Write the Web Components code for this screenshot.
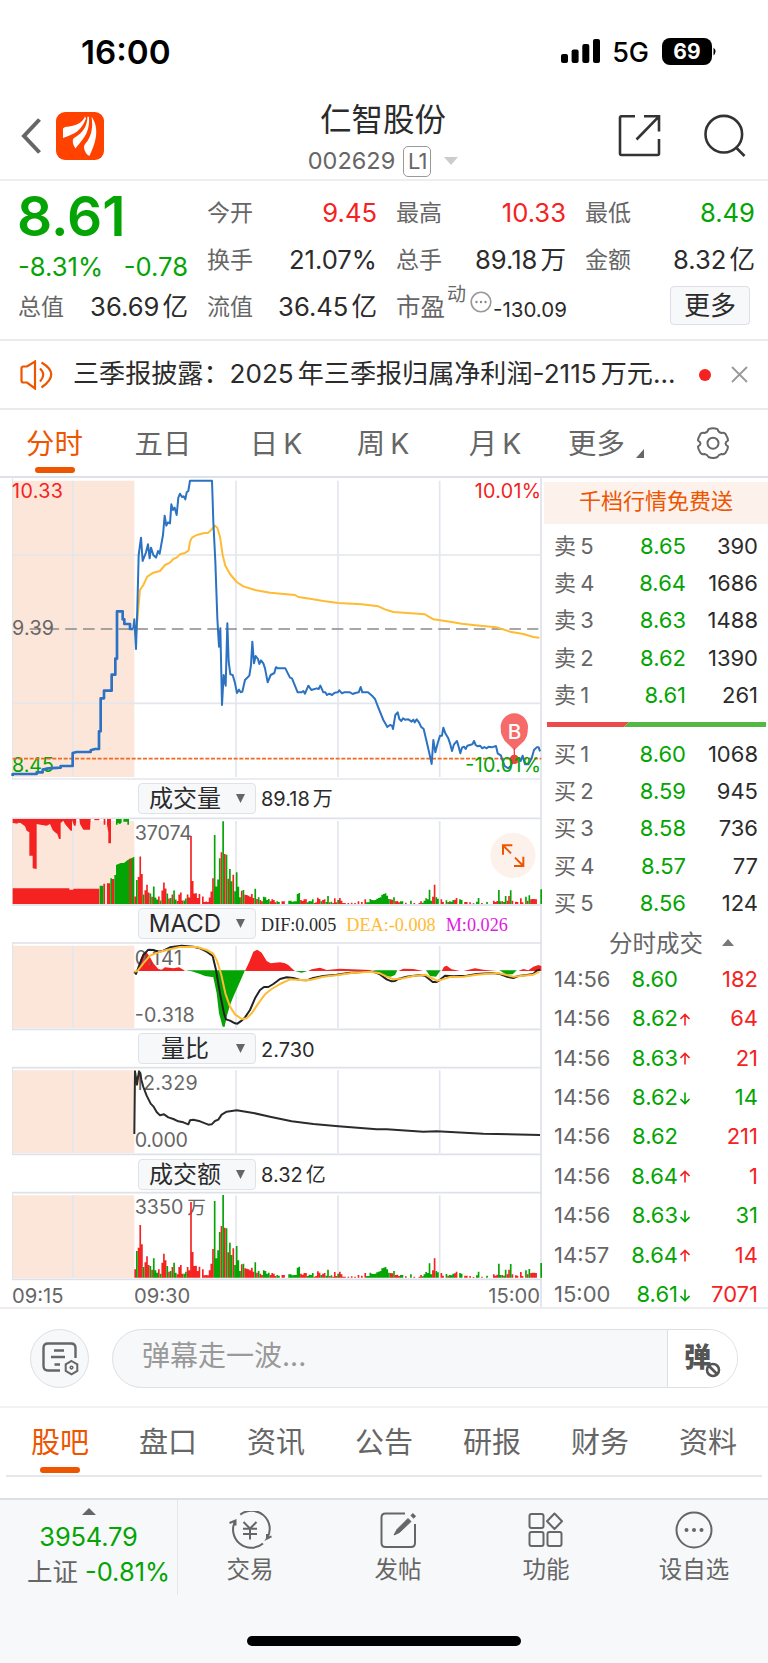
<!DOCTYPE html>
<html lang="zh-CN">
<head>
<meta charset="utf-8">
<title>仁智股份 002629</title>
<style>
  :root {
    --up: #f52222;
    --down: #04a404;
    --brand: #ee5500;
    --ink: #2b2b2b;
    --grey: #666;
    --line: #e4e6eb;
    --panel: #f7f8fa;
  }

  * {
    box-sizing: border-box;
  }

  body {
    margin: 0;
    width: 768px;
    height: 1663px;
    overflow: hidden;
    background: white;
    color: var(--ink);
    font-family: Inter, "Noto Sans CJK SC", sans-serif;
  }

  main {
    display: grid;
    grid-template-columns: 542px 226px;
    grid-template-rows: 829px;
    height: 831px;
    border-bottom: 2px solid #ededf0;
  }
</style>
</head>
<body>
<status-bar time="16:00" network="5G" battery="69"></status-bar>
<stock-header code="002629" level="L1">仁智股份</stock-header>
<quote-board></quote-board>
<notice-bar>三季报披露：2025<i></i>年三季报归属净利润-2115<i></i>万元...</notice-bar>
<period-tabs></period-tabs>
<main>
  <chart-column></chart-column>
  <order-book></order-book>
</main>
<comment-bar>弹幕走一波...</comment-bar>
<section-tabs items="股吧,盘口,资讯,公告,研报,财务,资料"></section-tabs>
<bottom-bar></bottom-bar>

<script>
// registers an element whose shadow root is a clone of the given markup
function define(name, html, setup) {
  const template = document.createElement("template");
  template.innerHTML = `<style>* { box-sizing: border-box; } svg { display: block; }</style>` + html;
  customElements.define(name, class extends HTMLElement {
    connectedCallback() {
      if (!this.shadowRoot) {
        const root = this.attachShadow({ mode: "open" });
        root.appendChild(template.content.cloneNode(true));
        if (setup) {
          setup(this, root);
        }
      }
    }
  });
}

define("status-bar", `
  <style>
    :host {
      display: flex;
      align-items: center;
      height: 102px;
      padding: 0 52px 0 81px;
      color: black;
    }
    .time {
      flex: 1;
      font-size: 33.200px;
      font-weight: 600;
      line-height: 40px;
      padding-top: 2px;
    }
    .net {
      font-size: 27px;
      font-weight: 500;
      line-height: 32px;
      margin: 3px 13px 0 12px;
    }
    .battery {
      width: 50px;
      height: 27px;
      border-radius: 8px;
      background: black;
      color: white;
      font-size: 21px;
      font-weight: 700;
      line-height: 27px;
      text-align: center;
    }
  </style>
  <span class="time"></span>
  <svg width="39" height="25" viewBox="0 0 39 25"><rect y="15" width="7" height="9" rx="2"/><rect x="10.6" y="10.5" width="7" height="13.5" rx="2"/><rect x="21.3" y="5" width="7" height="19" rx="2"/><rect x="32" width="7" height="24" rx="2"/></svg>
  <span class="net"></span>
  <span class="battery"></span>
  <svg width="4" height="9" viewBox="0 0 4 9"><path d="M1.500 0.500Q5.500 4.500 1.500 8.500Z"/></svg>
`, (host, root) => {
  root.querySelector(".time").textContent = host.getAttribute("time");
  root.querySelector(".net").textContent = host.getAttribute("network");
  root.querySelector(".battery").textContent = host.getAttribute("battery");
});

define("stock-header", `
  <style>
    :host {
      display: grid;
      grid-template-columns: 260px 246px 262px;
      height: 79px;
      border-bottom: 2px solid #eeeef0;
    }
    .left {
      display: flex;
      gap: 14px;
      padding: 10px 0 0 20px;
    }
    .left .back {
      margin-top: 5px;
    }
    .mid {
      text-align: center;
    }
    .name {
      font-size: 31.500px;
      line-height: 35px;
    }
    .sub {
      display: flex;
      justify-content: center;
      align-items: center;
      margin-top: 8px;
      gap: 9px;
      font-size: 23.500px;
      line-height: 32px;
      color: var(--grey);
    }
    .level {
      width: 28px;
      height: 31px;
      border: 1.500px solid #999;
      border-radius: 5px;
      line-height: 29px;
      font-size: 22px;
      letter-spacing: -1px;
      margin-left: -1px;
    }
    .sub svg {
      margin-left: 4px;
    }
    .right {
      display: flex;
      justify-content: flex-end;
      gap: 43px;
      padding: 12px 22px 0 0;
    }
  </style>
  <div class="left">
    <svg class="back" width="22" height="38" viewBox="0 0 22 38" fill="none" stroke="#666" stroke-width="4"><path d="M19.500 2.500L4 19L19.500 35.500"/></svg>
    <svg width="48" height="48" viewBox="0 0 48 48"><rect width="48" height="48" rx="9" fill="#ff4200"/><g fill="white"><path d="M29 4.500C27 10 21 14 9 15L7 16.500V26C14 23 24 22 30 6.500Z"/><path d="M31.500 4.500C31 14 28 20 18 26C16 28 16.500 32 19.500 36.500C27 27 34 21 33 5Z"/><path d="M35.500 5C37 14 36 22 31.500 29C28 33 26 35 31 42.500L33.500 44C37 36 45 20 36.500 6Z"/></g></svg>
  </div>
  <div class="mid">
    <div class="name"><slot></slot></div>
    <div class="sub"><span class="code"></span><span class="level"></span><svg width="14" height="8" viewBox="0 0 14 8"><path d="M0 0H14L7 8Z" fill="#ccc"/></svg></div>
  </div>
  <div class="right">
    <svg width="43" height="43" viewBox="0 0 43 43" fill="none" stroke="#333" stroke-width="2.600"><path d="M17 2.300H3.500Q2 2.300 2 4V39.500Q2 41 3.500 41H39.500Q41 41 41 39.500V25M26 2.300H41V17.500M41 2.300L18.500 25.500"/></svg>
    <svg width="42" height="43" viewBox="0 0 42 43" fill="none" stroke="#333" stroke-width="2.600"><circle cx="19.800" cy="20.200" r="18.300"/><path d="M31.500 33L40.500 42"/></svg>
  </div>
`, (host, root) => {
  root.querySelector(".code").textContent = host.getAttribute("code");
  root.querySelector(".level").textContent = host.getAttribute("level");
});

define("quote-item", `
  <style>
    :host {
      display: flex;
      justify-content: space-between;
      align-items: center;
      height: 30px;
      font-size: 25.600px;
      line-height: 30px;
      white-space: nowrap;
    }
    .label {
      color: var(--grey);
      font-size: 23px;
    }
    ::slotted(i) {
      display: inline-block;
      width: 3px;
    }
  </style>
  <span class="label"></span><span><slot></slot></span>
`, (host, root) => {
  root.querySelector(".label").textContent = host.getAttribute("label");
});

define("quote-board", `
  <style>
    :host {
      display: grid;
      grid-template-columns: 170px 170px 170px 170px;
      column-gap: 19px;
      height: 160px;
      padding: 0 0 0 18px;
      border-bottom: 2px solid #ebebed;
    }
    .col {
      display: flex;
      flex-direction: column;
      gap: 17px;
      padding-top: 17px;
    }
    .first {
      padding-top: 8px;
      gap: 0;
    }
    .price {
      height: 54px;
      line-height: 54px;
      font-size: 55px;
      font-weight: 600;
      color: var(--down);
      margin-left: -1px;
    }
    .change {
      display: flex;
      justify-content: space-between;
      margin: 9px 0 10px;
      height: 30px;
      line-height: 30px;
      font-size: 25.600px;
      color: var(--down);
    }
    .up {
      color: var(--up);
    }
    .down {
      color: var(--down);
    }
    .pe {
      display: flex;
      align-items: center;
      height: 30px;
      line-height: 30px;
      font-size: 24.500px;
      color: var(--grey);
      white-space: nowrap;
    }
    .pe sup {
      font-size: 19px;
      line-height: 18px;
      margin: -25px 4px 0 2px;
    }
    .pe svg {
      margin-top: -11px;
      flex: none;
    }
    .pe b {
      font-size: 20.500px;
      font-weight: 400;
      color: var(--ink);
      margin: 6px 0 0 1px;
    }
    .more {
      align-self: flex-end;
      margin: -6px 5px 0 0;
      width: 80px;
      height: 39px;
      border: 1.500px solid #dcdfe6;
      border-radius: 4px;
      background: var(--panel);
      text-align: center;
      font-size: 26px;
      line-height: 37px;
    }
  </style>
  <div class="col first">
    <div class="price">8.61</div>
    <div class="change"><span>-8.31%</span><span>-0.78</span></div>
    <quote-item label="总值">36.69<i></i>亿</quote-item>
  </div>
  <div class="col">
    <quote-item label="今开" class="up">9.45</quote-item>
    <quote-item label="换手">21.07%</quote-item>
    <quote-item label="流值">36.45<i></i>亿</quote-item>
  </div>
  <div class="col">
    <quote-item label="最高" class="up">10.33</quote-item>
    <quote-item label="总手">89.18<i></i>万</quote-item>
    <div class="pe"><span>市盈</span><sup>动</sup><svg width="22" height="22" viewBox="0 0 22 22"><circle cx="11" cy="11" r="9.800" fill="none" stroke="#999" stroke-width="1.600"/><g fill="#888"><circle cx="6.500" cy="11" r="1.200"/><circle cx="11" cy="11" r="1.200"/><circle cx="15.500" cy="11" r="1.200"/></g></svg><b>-130.09</b></div>
  </div>
  <div class="col">
    <quote-item label="最低" class="down">8.49</quote-item>
    <quote-item label="金额">8.32<i></i>亿</quote-item>
    <div class="more">更多</div>
  </div>
`);

define("notice-bar", `
  <style>
    :host {
      display: flex;
      align-items: center;
      height: 69px;
      padding: 0 20px;
      border-bottom: 2px solid #eaeaec;
      white-space: nowrap;
    }
    .text {
      flex: 1;
      margin: -2px 0 0 20px;
      font-size: 26.100px;
      line-height: 40px;
    }
    ::slotted(i) {
      display: inline-block;
      width: 4px;
    }
    .dot {
      width: 12px;
      height: 12px;
      border-radius: 6px;
      background: #f52222;
      margin-right: 20px;
    }
  </style>
  <svg width="33" height="30" viewBox="0 0 33 30" fill="none" stroke="#ee5500" stroke-width="2.200"><path d="M1.500 8.500Q1.500 6.500 3.500 6.500H7L15 1.500V28.500L7 22.500H3.500Q1.500 22.500 1.500 20.500ZM20 8.500Q26.500 14.500 20 21.500M21.500 2.500Q41 14 21.500 27.500"/></svg>
  <span class="text"><slot></slot></span>
  <span class="dot"></span>
  <svg width="17" height="17" viewBox="0 0 17 17" stroke="#999" stroke-width="1.800"><path d="M1 1L16 16M16 1L1 16"/></svg>
`);

define("period-tabs", `
  <style>
    :host {
      display: grid;
      grid-template-columns: 109px 108px 118px 96px 128px 76px 1fr;
      height: 68px;
      border-bottom: 2px solid #dfe1e8;
      font-size: 28.400px;
      line-height: 40px;
      color: var(--grey);
      text-align: center;
    }
    span {
      padding-top: 14px;
      word-spacing: -3px;
    }
    .on {
      display: flex;
      flex-direction: column;
      align-items: center;
      color: var(--brand);
    }
    .on::after {
      content: "";
      width: 40px;
      height: 6px;
      border-radius: 3px;
      background: var(--brand);
      margin-top: 3px;
    }
    .more {
      display: flex;
      padding-left: 9px;
    }
    .more b {
      font-weight: 400;
      white-space: nowrap;
    }
    .more svg {
      margin: 25px 0 0 11px;
      flex: none;
    }
    .gear {
      margin: 17px 0 0 62px;
    }
  </style>
  <span class="on">分时</span><span>五日</span><span>日 K</span><span>周 K</span><span>月 K</span>
  <span class="more"><b>更多</b><svg width="8" height="9" viewBox="0 0 8 9"><path d="M8 0V9H0Z" fill="#666"/></svg></span>
  <svg class="gear" width="32" height="32" viewBox="0 0 32 32" fill="none" stroke="#666" stroke-width="2" stroke-linejoin="round"><path d="M11.500 2.200Q16 .2 20.500 2.200Q21.500 5.700 24.500 6Q28 5.300 29 8Q31 11 31 13.500Q28.500 15 28.500 16.500Q28.500 18 31 19.500Q31 22 29 25Q28 27.700 24.500 27Q21.500 27.500 20.500 30Q16 32 11.500 30Q10.500 27.500 7.500 27Q4 27.700 3 25Q1 22 1 19.500Q3.500 18 3.500 16.500Q3.500 15 1 13.500Q1 11 3 8Q4 5.300 7.500 6Q10.500 5.700 11.500 2.200Z"/><circle cx="16" cy="16.200" r="5.500"/></svg>
`);

// toolbar with a picker, the current value and the plot under it
define("chart-panel", `
  <style>
    :host {
      display: block;
      height: 125.300px;
    }
    .bar {
      display: flex;
      align-items: center;
      height: 38.500px;
      padding: 0 0 0 138px;
    }
    .picker {
      display: flex;
      align-items: center;
      justify-content: space-between;
      width: 118px;
      height: 31px;
      padding: 0 10px 0 0;
      border: 1.500px solid #e0e2e8;
      border-radius: 4px;
      background: var(--panel);
      font-size: 24px;
      line-height: 29px;
    }
    .picker span {
      flex: 1;
      text-align: center;
      padding-right: 5px;
    }
    .value {
      margin: 2px 0 0 5px;
      font-size: 20px;
      line-height: 30px;
      white-space: pre;
    }
    ::slotted(svg) {
      display: block;
    }
  </style>
  <div class="bar">
    <div class="picker"><span></span><svg width="9" height="9" viewBox="0 0 9 9"><path d="M0 0H9L4.500 9Z" fill="#666"/></svg></div>
    <div class="value"><slot name="value"></slot></div>
  </div>
  <slot></slot>
`, (host, root) => {
  root.querySelector(".picker span").textContent = host.getAttribute("label");
});

// turnover per minute: index, r(ed) or g(reen), height
const bars = `0r25 1g80 2r90 3r158 4r100 5g32 6r46 7r64 8r38 9g35 10r24 11g58 12g22 13g15 14r25 15g12 16r45 17r72 18r52 19g35 20r18
21g20 22r32 23g45 24g15 25r10 26r32 27r38 28r12 29g12 30g18 31r32 32r22 33r227 34r77 35r35 36r36 37r20 38r33 40r25 41r7 42r8 43r7
44r22 45r42 46r86 47g230 48g58 49g82 50g137 51r155 52g248 53r150 54g148 55r76 56g105 57g68 58r88 59g38 60g95 61g52 62g20 63r40 64g42
65r28 66r27 67r25 68r22 69r30 70r18 71g46 72r15 73g20 74r12 75r8 76g22 77g20 78g12 79g15 80r8 81r14 82r12 83r5 84g8 85g6 87r8 88r8
91g10 92g10 93g7 94g8 95g8 96g30 97g33 98r12 99r9 100r14 101r14 102g5 103g9 104g8 105g14 106r3 107r5 108r19 109r15 110g8 111r12 112r14
113g6 114g24 115r5 116g7 117r3 118r17 119r5 120g12 121r18 122r10 123r3 124r3 126r3 128r4 130r3 132r8 134r6 136r14 137g5 138g5 139g15
140g12 141g11 142g12 143g16 144g18 145g20 146g28 147g30 148g32 149g25 150g15 151r14 152r13 153g20 154r8 155r9 156r5 157g8 158g8 160r4
163g10 165r3 168r3 169r8 170g4 171g10 172g17 173g14 174g43 175g10 176r22 177r58 178g20 179g16 181r14 182r6 184g11 185r6 186g8 187g7
188g12 189r13 190r18 192g14 193g12 195r6 196r6 198r5 200r2 202g7 203g18 205r3 208g6 212r10 213r6 214r9 215g42 216g8 217r8 218g6 219g24
220r10 221r24 222g41 223r10 225r7 226r6 228r17 229r5 231g22 232r10 233g26 234r14 235r15 236r15 237r14 240g44`;

// early minutes count for less in volume than in money
function drawBars(base, early) {
  let red = "";
  let green = "";
  bars.split(/\s+/).forEach(bar => {
    const [, i, color, h] = bar.match(/(\d+)([rg])(\d+)/);
    const height = i < 50 ? h * early : h;
    const d = `M${403 + i * 5.075} ${base}v-${height}h5v${height}z`;
    if (color === "r") {
      red += d;
    } else {
      green += d;
    }
  });
  return `<path d="${red}" fill="#f52222"/><path d="${green}" fill="#04a404"/>`;
}

// frame of a plot, in thirds of a pixel
function grid(top, bottom) {
  return `<path d="M38 ${top + 8}H403V${bottom - 4}H38Z" fill="#fce6da"/>
    <path d="M36 ${top}H1626M36 ${bottom}H1626" stroke="#dfe1e8" stroke-width="5"/>
    <path d="M38 ${top}V${bottom}" stroke="#dfe1e8" stroke-width="3"/>
    <path d="M219 ${top + 8}V${bottom - 4}M708 ${top + 8}V${bottom - 4}M1014 ${top + 8}V${bottom - 4}M1319 ${top + 8}V${bottom - 4}" stroke="#e3e6ec" stroke-width="5"/>`;
}

define("chart-column", `
  <style>
    :host {
      display: flex;
      flex-direction: column;
      width: 542px;
      border-right: 2px solid var(--line);
    }
    svg {
      overflow: visible;
      flex: none;
    }
    svg text {
      font-size: 59px;
      fill: #666;
    }
    .macd {
      font-family: "Liberation Serif", serif;
      font-size: 18.200px;
      display: flex;
      gap: 10px;
    }
    .times {
      display: flex;
      height: 27px;
      padding: 2px 0 0 12px;
      font-size: 20.200px;
      line-height: 28px;
      color: #666;
    }
    .times span {
      width: 122px;
    }
    .times span:last-child {
      flex: 1;
      text-align: right;
    }
    i {
      display: inline-block;
      width: 3px;
    }
  </style>
  <svg width="542" height="301" viewBox="0 9 1626 903">
    <path d="M38 17H403V906H38Z" fill="#fce6da"/>
    <path d="M38 10V912" stroke="#dfe1e8" stroke-width="3"/>
    <path d="M219 17V906M708 17V906M1014 17V906M1319 17V906M38 240H1624M38 685H1624M36 912H1624" stroke="#e3e6ec" stroke-width="5"/>
    <path d="M89 462H1615" stroke="#8a8a8a" stroke-width="5" stroke-dasharray="35 18.300"/>
    <text x="36" y="69" textLength="153" style="fill:#f52222">10.33</text>
    <text x="36" y="480" textLength="126">9.39</text>
    <text x="36" y="891" textLength="126" style="fill:#04a404">8.45</text>
    <text x="1424" y="69" textLength="199" style="fill:#f52222">10.01%</text>
    <path d="M38 851H1624" stroke="#f06a20" stroke-width="5" stroke-dasharray="12 5"/>
    <g fill="none" stroke-linejoin="round">
      <path stroke="#ffbb33" stroke-width="6" d="M408 480L415 400L420 345L430 330L442 305L460 293L480 288L495 270L510 263L520 252L530 248L540 238L555 234L566 226L570 200L576 188L590 180L610 175L625 173L635 163L645 152L652 158L660 185L668 240L676 272L690 297L710 321L730 334L765 345L810 353L885 360L895 366L935 372L970 378L1015 384L1085 388L1135 394L1155 403L1180 411L1275 418L1300 433L1355 441L1385 446L1440 452L1490 457L1530 470L1570 477L1600 486L1618 488"/>
      <path stroke="#2b72c2" stroke-width="8" d="M38 903V897H110V892H128V884L145 880L182 878V873H218V834L230 831H272V826L285 822H297V769H302V670H312V647H335V599H346V551H351V409H368V433H373V447H390V462H400"/>
      <path stroke="#2b72c2" stroke-width="6" d="M400 461L403 433L408 522L412 400L416 240L423 188L428 258L438 232L444 208L449 250L453 218L460 240L468 248L474 228L479 236L489 180L494 122L499 152L504 142L510 145L514 88L519 105L524 98L530 120L535 68L540 56L546 66L551 64L556 73L560 52L565 48L570 17H636L640 140L646 260L652 430L657 515L661 460L666 690L671 600L677 632L682 445L686 560L691 598L698 600L704 620L711 654L717 644L722 652L727 650L735 615L748 602L753 570L757 500L762 565L767 543L774 552L778 567L783 556L790 565L795 580L803 622L812 600L823 594L828 575"/>
      <path stroke="#2b72c2" stroke-width="6" transform="translate(810)" d="M18 575L22 580H46L60 608L66 610L83 652H95L100 648L105 656L115 632L124 645L140 640L146 642L151 632L160 652H166L171 660L178 656L186 660L194 653L203 652L208 646L216 655L222 652H240L248 657L256 654L266 652L272 636L277 652H294L306 662L315 672L325 698L340 735L352 756L360 750L366 752L369 762L376 720L383 712L388 732L394 738L399 730L405 734L415 733L425 740L430 734L434 742L440 733L447 742L453 755L461 762L470 800L478 835L485 867L490 795L496 832L503 805L510 782H516L520 758L526 775L534 788L540 805L546 828L552 808L561 798L566 815L571 835L576 818L582 815L587 822L592 812L607 808L612 798L617 810L623 814L630 812L637 820L643 816L650 820L656 815L665 817L678 813L683 835L693 842L698 858L704 873L715 880L722 873L728 860L735 853L745 852L752 858L758 842L765 868H775L785 850L792 825L800 817H806L810 829"/>
    </g>
    <path d="M1514 797Q1500 775 1503 765A41 41 0 1 1 1583 765Q1585 780 1573 797L1543 826Z" fill="#f66a6a"/>
    <path d="M1543 820V845" stroke="#f04040" stroke-width="4"/>
    <circle cx="1543" cy="853" r="14" fill="#f04040"/>
    <text x="1523" y="792" style="fill:white;font-size:62px;font-weight:500">B</text>
    <text x="1396" y="891" textLength="227" style="fill:#04a404">-10.01%</text>
  </svg>
  <chart-panel label="成交量">
    <span slot="value">89.18<i></i>万</span>
    <svg id="volume" width="542" height="86" viewBox="0 112 1626 258"></svg>
  </chart-panel>
  <chart-panel label="MACD">
    <span slot="value" class="macd"><span>DIF:0.005</span><span style="color:#fb3">DEA:-0.008</span><span style="color:#e01ae0">M:0.026</span></span>
    <svg id="macd" width="542" height="86" viewBox="0 489 1626 258"></svg>
  </chart-panel>
  <chart-panel label="量比">
    <span slot="value">2.730</span>
    <svg id="ratio" width="542" height="86" viewBox="0 115 1626 258"></svg>
  </chart-panel>
  <chart-panel label="成交额">
    <span slot="value">8.32<i></i>亿</span>
    <svg id="amount" width="542" height="86" viewBox="0 491 1626 258"></svg>
  </chart-panel>
  <div class="times"><span>09:15</span><span>09:30</span><span>15:00</span></div>
`, (host, root) => {
  root.querySelector("#volume").innerHTML = `
    ${grid(113, 373)}
    <text x="404" y="178" textLength="172">37074</text>
    <path fill="#f52222" d="M38 370V323H208V327H220V324H298V370ZM310 370V309H315V370ZM321 370V308H331V370ZM336 370V295H343V370ZM38 115V127L53 129V126L62 127L75 137L80 150L88 155V225H98V263L110 265V130L125 133L140 135L150 130L158 148L165 155L172 160L177 175H182V127L190 120L195 130L205 142L212 150H216V118L222 135H227L229 115ZM238 115L240 130L250 147H270L272 115ZM283 115V119H298V115ZM311 115V132H316V115ZM321 115V132L325 155V188H333V115Z"/>
    <path fill="#04a404" d="M299 370V315H310V370ZM331 370V293H336V370ZM343 370V283H348V253L362 247H372L383 238L403 228V370ZM348 115V132H353V126L360 131L365 125V115ZM370 115V123H382V132H387V115Z"/>
    <path fill="#f52222" d="M388 370V234H394V370Z"/>
    ${drawBars(370, 0.9)}
    <circle cx="1539" cy="224" r="68" fill="#fdf1ec"/>
    <path d="M1509 222V194H1537M1509 194L1533 218M1542 256H1570V228M1570 256L1545 231" fill="none" stroke="#ee5500" stroke-width="6"/>`;

  root.querySelector("#macd").innerHTML = `
    ${grid(489, 748)}
    <path fill="#f52222" d="M415 573L420 540L430 518L440 517L450 532L460 550L475 567L485 569L495 562L520 565L537 562L550 569L555 573ZM735 573L748 545L760 515L772 509L785 518L800 543L812 550L840 547L855 550L865 555L875 565L885 573ZM925 573L935 568L960 563L980 570L1020 566L1110 570L1115 573ZM1195 573L1210 566L1240 567L1270 573ZM1325 573L1332 560L1340 557L1355 568L1380 573ZM1390 573L1425 565L1450 569L1490 573ZM1555 573L1570 567L1585 571L1600 560L1615 555L1624 558V573Z"/>
    <path fill="#04a404" d="M555 571H735L720 605L700 650L690 675L680 710L674 740H668L657 700L650 640L640 592L615 588L600 582L575 574ZM885 573L905 578L922 573ZM1120 571H1192L1185 585L1172 590L1150 587ZM1278 571H1322L1308 590L1290 588ZM1498 571H1550L1538 583L1520 584Z"/>
    <text x="404" y="554" textLength="142">0.141</text>
    <text x="404" y="725" textLength="180">-0.318</text>
    <g fill="none" stroke-width="6" stroke-linejoin="round">
      <path stroke="#222" d="M403 575L408 582L418 555L430 525L445 509L460 510L475 515L490 512L510 502L545 497L580 500L600 505L620 515L638 528L648 570L660 640L672 700L678 718L690 722L705 730L712 731L725 722L735 712L750 690L765 655L780 630L792 621H805L820 612L840 597L860 592L880 594L900 600L920 601L940 594L970 588L1010 584L1050 578L1100 575H1120L1140 583L1160 598L1175 604L1185 603L1195 597L1220 590L1260 585L1275 587L1288 598L1298 606H1310L1322 598L1335 587L1360 589L1400 587L1430 582L1480 579L1500 582L1520 590L1540 594L1555 588L1580 585L1600 582L1610 572L1620 569"/>
      <path stroke="#ffbb33" d="M403 575L412 573L430 550L450 527L475 517L500 510L540 501H590L620 510L640 521L652 545L664 585L676 640L690 680L705 703L725 717L740 715L755 700L775 670L795 643L815 627L840 612L870 598L900 600H930L970 590L1015 585L1060 578L1110 575L1140 580L1160 590L1180 598L1210 595L1240 588L1275 584L1295 594L1310 602L1325 599L1350 591L1390 590L1430 584L1490 579L1510 583L1540 590L1570 587L1600 584L1618 575"/>
    </g>`;

  root.querySelector("#ratio").innerHTML = `
    ${grid(114, 374)}
    <text x="404" y="180" textLength="189">12.329</text>
    <text x="404" y="351" textLength="160">0.000</text>
    <path fill="none" stroke="#2b2b2b" stroke-width="6" stroke-linejoin="round" d="M403 313L405 125L411 165L417 125L421 130L424 150L430 172L440 198L452 222L460 230L470 247L480 257L492 254L505 263L520 268L535 275L550 278L565 284L570 272L580 270L600 275L625 285L635 284L645 274L655 270L665 255L680 246L710 242L760 250L810 261L875 275L940 283L1015 290L1130 299H1160L1270 306L1310 305L1450 312L1620 316"/>`;

  root.querySelector("#amount").innerHTML = `
    ${grid(490, 750)}
    <text x="404" y="555" textLength="146">3350</text>
    <text x="562" y="555" style="font-size:56px">万</text>
    ${drawBars(745, 1)}`;
});

define("order-book", `
  <style>
    :host {
      display: block;
      padding: 4px 0 0 2px;
      font-size: 22px;
    }
    .promo {
      height: 42px;
      margin-bottom: 3px;
      background: #fdf1ec;
      color: var(--brand);
      text-align: center;
      line-height: 39px;
    }
    .row, .trade {
      display: grid;
      grid-template-columns: 61px 71px 72px;
      height: 37.200px;
      line-height: 38px;
      padding-left: 10px;
      color: var(--grey);
      text-align: right;
      white-space: nowrap;
    }
    .row span:first-child, .trade span:first-child {
      text-align: left;
    }
    .row span:first-child {
      word-spacing: -2px;
    }
    .row span:last-child {
      color: var(--ink);
    }
    .row span:nth-child(2) {
      color: var(--down);
    }
    .ratio {
      display: block;
      margin: 9px 0 8px 3px;
    }
    .head {
      display: flex;
      align-items: center;
      gap: 19px;
      height: 38px;
      padding: 5px 0 0 65px;
      font-size: 23.500px;
      color: var(--grey);
    }
    .trade {
      grid-template-columns: 58px 66px 13px 67px;
      height: 39.400px;
      line-height: 41px;
    }
    .trade svg {
      align-self: center;
      margin: 1px 0 0 2px;
    }
  </style>
  <div class="promo">千档行情免费送</div>
  <div id="sell"></div>
  <svg class="ratio" width="219" height="5" viewBox="0 0 219 5"><path d="M0 0H82L77 5H0Z" fill="#eb4b4b"/><path d="M82 0H219V5H77Z" fill="#55b845"/></svg>
  <div id="buy"></div>
  <div class="head">分时成交<svg width="12" height="7" viewBox="0 0 12 7"><path d="M0 7L6 0L12 7Z" fill="#77777d"/></svg></div>
  <div id="trades"></div>
`, (host, root) => {
  const row = ([name, price, count]) => `<div class="row"><span>${name}</span><span>${price}</span><span>${count}</span></div>`;
  root.querySelector("#sell").innerHTML = [
    ["卖 5", "8.65", 390],
    ["卖 4", "8.64", 1686],
    ["卖 3", "8.63", 1488],
    ["卖 2", "8.62", 1390],
    ["卖 1", "8.61", 261]
  ].map(row).join("");
  root.querySelector("#buy").innerHTML = [
    ["买 1", "8.60", 1068],
    ["买 2", "8.59", 945],
    ["买 3", "8.58", 736],
    ["买 4", "8.57", 77],
    ["买 5", "8.56", 124]
  ].map(row).join("");

  const arrows = {
    up: `<path d="M5 12.500V1.500M.5 6L5 1.500L9.500 6" stroke="#f52222"/>`,
    down: `<path d="M5 .5V11.500M.5 7L5 11.500L9.500 7" stroke="#04a404"/>`,
    "": ""
  };
  root.querySelector("#trades").innerHTML = [
    ["14:56", "8.60", "", 182, "up"],
    ["14:56", "8.62", "up", 64, "up"],
    ["14:56", "8.63", "up", 21, "up"],
    ["14:56", "8.62", "down", 14, "down"],
    ["14:56", "8.62", "", 211, "up"],
    ["14:56", "8.64", "up", 1, "up"],
    ["14:56", "8.63", "down", 31, "down"],
    ["14:57", "8.64", "up", 14, "up"],
    ["15:00", "8.61", "down", 7071, "up"]
  ].map(([time, price, move, count, side]) => `<div class="trade"><span>${time}</span><span style="color:var(--down)">${price}</span><svg width="10" height="13" viewBox="0 0 10 13" fill="none" stroke-width="1.600">${arrows[move]}</svg><span style="color:var(--${side})">${count}</span></div>`).join("");
});

define("comment-bar", `
  <style>
    :host {
      display: flex;
      gap: 23px;
      height: 99px;
      padding: 20px 0 0 30px;
      border-bottom: 2px solid #f2f2f4;
    }
    .round, .field {
      height: 59px;
      border: 1.500px solid #dcdfe6;
      border-radius: 30px;
      background: var(--panel);
    }
    .round {
      width: 59px;
      display: grid;
      place-items: center;
      padding-left: 1px;
    }
    .field {
      display: flex;
      width: 626px;
      overflow: hidden;
    }
    .hint {
      flex: 1;
      padding-left: 29px;
      font-size: 28px;
      line-height: 52px;
      color: #999;
    }
    .toggle {
      position: relative;
      width: 70px;
      background: white;
      border-left: 1.500px solid #dcdfe6;
      padding-left: 16px;
      font-size: 27px;
      line-height: 56px;
      font-weight: 900;
      color: #555;
    }
    .toggle svg {
      position: absolute;
      left: 37px;
      top: 32px;
    }
  </style>
  <div class="round"><svg width="37" height="34" viewBox="0 0 37 34" fill="none" stroke="#666" stroke-width="2.400"><path d="M18 28.500H6Q1.500 28.500 1.500 24V6Q1.500 1.500 6 1.500H29Q33.500 1.500 33.500 6V16M12 8.500H22M9 15H23M12.500 22.500H18"/><path d="M29.500 19L35.300 22.300V28.900L29.500 32.300L23.700 28.900V22.300Z" stroke-width="2"/><circle cx="29.500" cy="25.600" r="1.300" stroke-width="1.600"/></svg></div>
  <div class="field">
    <div class="hint"><slot></slot></div>
    <div class="toggle">弹<svg width="16" height="16" viewBox="0 0 16 16" fill="white" stroke="#555" stroke-width="2.600"><circle cx="8" cy="8" r="6"/><path d="M4 4L12 12"/></svg></div>
  </div>
`);

define("section-tabs", `
  <style>
    :host {
      display: flex;
      height: 69px;
      margin: 0 6px;
      border-bottom: 2px solid #e6e7ea;
      font-size: 29px;
      line-height: 40px;
      color: var(--grey);
    }
    span {
      display: flex;
      flex-direction: column;
      align-items: center;
      width: 108px;
      padding-top: 15px;
      flex: none;
    }
    .on {
      color: var(--brand);
    }
    .on::after {
      content: "";
      width: 40px;
      height: 6px;
      border-radius: 3px;
      background: var(--brand);
      margin-top: 4px;
    }
  </style>
`, (host, root) => {
  host.getAttribute("items").split(",").forEach((item, index) => {
    const span = document.createElement("span");
    span.textContent = item;
    if (index === 0) {
      span.className = "on";
    }
    root.appendChild(span);
  });
});

define("bar-item", `
  <style>
    :host {
      display: flex;
      flex-direction: column;
      align-items: center;
      width: 148px;
      padding-top: 11px;
      gap: 4px;
      font-size: 23.500px;
      line-height: 34px;
      color: var(--grey);
    }
  </style>
  <slot name="icon"></slot><span><slot></slot></span>
`);

define("bottom-bar", `
  <style>
    :host {
      display: grid;
      grid-template-rows: 95px auto;
      height: 166px;
      margin-top: 21px;
      border-top: 2px solid #dcdfe3;
      background: var(--panel);
    }
    .items {
      display: flex;
    }
    .index {
      display: flex;
      flex-direction: column;
      align-items: center;
      width: 178px;
      border-right: 1.500px solid #e4e6ea;
      padding-top: 8px;
      font-size: 25.500px;
      line-height: 35px;
      color: var(--down);
      white-space: nowrap;
      margin-right: -2px;
    }
    .index div {
      padding-left: 20px;
    }
    .index .point {
      padding: 4px 0 0;
      letter-spacing: -0.200px;
    }
    .index b {
      font-weight: 400;
      color: var(--grey);
      margin-right: 7px;
    }
    .home {
      width: 274px;
      height: 10px;
      border-radius: 5px;
      background: black;
      margin: 41px auto 0 247px;
    }
    svg {
      fill: none;
      stroke: #666;
      stroke-width: 2;
    }
  </style>
  <div class="items">
    <div class="index">
      <svg width="14" height="7" viewBox="0 0 14 7"><path d="M0 7L7 0L14 7Z" fill="#666" stroke="none"/></svg>
      <div class="point">3954.79</div>
      <div><b>上证</b>-0.81%</div>
    </div>
    <bar-item><svg slot="icon" width="45" height="38" viewBox="0 0 45 38"><path d="M12.300 3.600A18.200 18.200 0 0 1 39 27.500L43.500 25.300M39 27.500V23M1.500 12L7.500 9.500V14.500M7.500 9.500A18.200 18.200 0 0 0 35 32.500M15.500 11L22 17.500L28.500 11M22 17.500V28.500M15 17.800H29M15 23H29"/></svg>交易</bar-item>
    <bar-item><svg slot="icon" width="38" height="38" viewBox="0 0 38 38"><path d="M26 2.500H6.500Q2.500 2.500 2.500 6.500V32Q2.500 36 6.500 36H32Q36 36 36 32V13"/><path d="M15 24L18 18.500L29 7.500L32 10.500L20.500 21.500Z" fill="#666" stroke-width="1"/><path d="M33 6.200L35.500 3.700" stroke-width="4.500"/></svg>发帖</bar-item>
    <bar-item><svg slot="icon" width="38" height="38" viewBox="0 0 38 38"><rect x="2.500" y="3" width="14" height="14" rx="2"/><rect x="2.500" y="21" width="14" height="14" rx="2"/><rect x="20.500" y="21" width="14" height="14" rx="2"/><path d="M27.500 2.500L35 10.300L27.500 18L20 10.300Z" stroke-linejoin="round"/></svg>功能</bar-item>
    <bar-item><svg slot="icon" width="38" height="38" viewBox="0 0 38 38"><circle cx="19" cy="19" r="17.500"/><g fill="#666" stroke="none"><circle cx="11.500" cy="19" r="2"/><circle cx="19" cy="19" r="2"/><circle cx="26.500" cy="19" r="2"/></g></svg>设自选</bar-item>
  </div>
  <div class="home"></div>
`);
</script>
</body>
</html>
